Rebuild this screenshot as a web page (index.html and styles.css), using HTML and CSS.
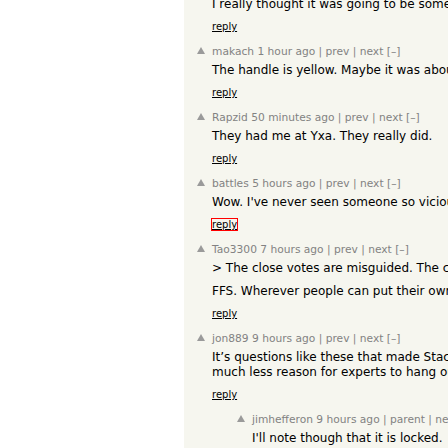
FILE: index.html
```html
<!DOCTYPE html>
<html>
<head>
<meta charset="utf-8">
<link rel="stylesheet" href="styles.css">
</head>
<body>
<div class="page">
  <div class="gutter"></div>
  <div class="main">
    <div class="thread">
      <div class="com first">
        <div class="vote"></div>
        <div class="content">
          <div class="text">I really thought it was going to be something else entirely.</div>
          <div class="reply"><a href="#">reply</a></div>
        </div>
      </div>

      <div class="com">
        <div class="vote"><svg class="arrow" viewBox="0 0 8 7"><polygon points="4,0 8,7 0,7"/></svg></div>
        <div class="content">
          <div class="head"><a href="#">makach</a> <a href="#">1 hour ago</a> | <a href="#">prev</a> | <a href="#">next</a> [–]</div>
          <div class="text">The handle is yellow. Maybe it was about the handle all along.</div>
          <div class="reply"><a href="#">reply</a></div>
        </div>
      </div>

      <div class="com">
        <div class="vote"><svg class="arrow" viewBox="0 0 8 7"><polygon points="4,0 8,7 0,7"/></svg></div>
        <div class="content">
          <div class="head"><a href="#">Rapzid</a> <a href="#">50 minutes ago</a> | <a href="#">prev</a> | <a href="#">next</a> [–]</div>
          <div class="text">They had me at Yxa. They really did.</div>
          <div class="reply"><a href="#">reply</a></div>
        </div>
      </div>

      <div class="com">
        <div class="vote"><svg class="arrow" viewBox="0 0 8 7"><polygon points="4,0 8,7 0,7"/></svg></div>
        <div class="content">
          <div class="head"><a href="#">battles</a> <a href="#">5 hours ago</a> | <a href="#">prev</a> | <a href="#">next</a> [–]</div>
          <div class="text">Wow. I've never seen someone so vicious about a chair.</div>
          <div class="reply"><a href="#" class="focused">reply</a></div>
        </div>
      </div>

      <div class="com">
        <div class="vote"><svg class="arrow" viewBox="0 0 8 7"><polygon points="4,0 8,7 0,7"/></svg></div>
        <div class="content">
          <div class="head"><a href="#">Tao3300</a> <a href="#">7 hours ago</a> | <a href="#">prev</a> | <a href="#">next</a> [–]</div>
          <div class="text">&gt; The close votes are misguided. The community decided otherwise.
            <p>FFS. Wherever people can put their own opinions, they will.</p></div>
          <div class="reply"><a href="#">reply</a></div>
        </div>
      </div>

      <div class="com">
        <div class="vote"><svg class="arrow" viewBox="0 0 8 7"><polygon points="4,0 8,7 0,7"/></svg></div>
        <div class="content">
          <div class="head"><a href="#">jon889</a> <a href="#">9 hours ago</a> | <a href="#">prev</a> | <a href="#">next</a> [–]</div>
          <div class="text">It’s questions like these that made Stack Overflow what it was, there is<br>much less reason for experts to hang out there now.</div>
          <div class="reply"><a href="#">reply</a></div>
        </div>
      </div>

      <div class="com ind1">
        <div class="vote"><svg class="arrow" viewBox="0 0 8 7"><polygon points="4,0 8,7 0,7"/></svg></div>
        <div class="content">
          <div class="head"><a href="#">jimhefferon</a> <a href="#">9 hours ago</a> | <a href="#">parent</a> | <a href="#">next</a> [–]</div>
          <div class="text">I'll note though that it is locked.</div>
          <div class="reply"><a href="#">reply</a></div>
        </div>
      </div>
    </div>
  </div>
</div>
</body>
</html>
```

FILE: styles.css
```css
html, body {
  margin: 0;
  padding: 0;
  overflow: hidden;
  background: #ffffff;
}

body {
  font-family: "DejaVu Sans", Verdana, sans-serif;
}

.page {
  display: flex;
  height: 448px;
}

.gutter {
  width: 184px;
  flex: none;
  background: #ffffff;
}

.main {
  flex: 1;
  min-width: 0;
  overflow: hidden;
  background: #f6f6ef;
}

.thread {
  margin-top: -3px;
}

.com {
  display: flex;
  margin-bottom: 12px;
}

.com.ind1 {
  padding-left: 40px;
}

.vote {
  width: 28px;
  flex: none;
  box-sizing: border-box;
  padding-left: 13px;
  padding-top: 2px;
}

.arrow {
  display: block;
  width: 8px;
  height: 7px;
  fill: #9a9a9a;
}

.content {
  white-space: nowrap;
}

.head {
  font-size: 8pt;
  line-height: 13px;
  color: #828282;
  margin-bottom: 5px;
}

.head a {
  color: #828282;
  text-decoration: none;
}

.text {
  font-size: 12px;
  line-height: 15px;
  color: #000000;
}

.text p {
  margin: 8px 0 0;
}

.reply {
  font-size: 10px;
  line-height: 12px;
  margin-top: 9px;
}

.reply a {
  color: #000000;
  text-decoration: underline;
}

.reply a.focused {
  outline: 1px solid #ff0000;
}
```
